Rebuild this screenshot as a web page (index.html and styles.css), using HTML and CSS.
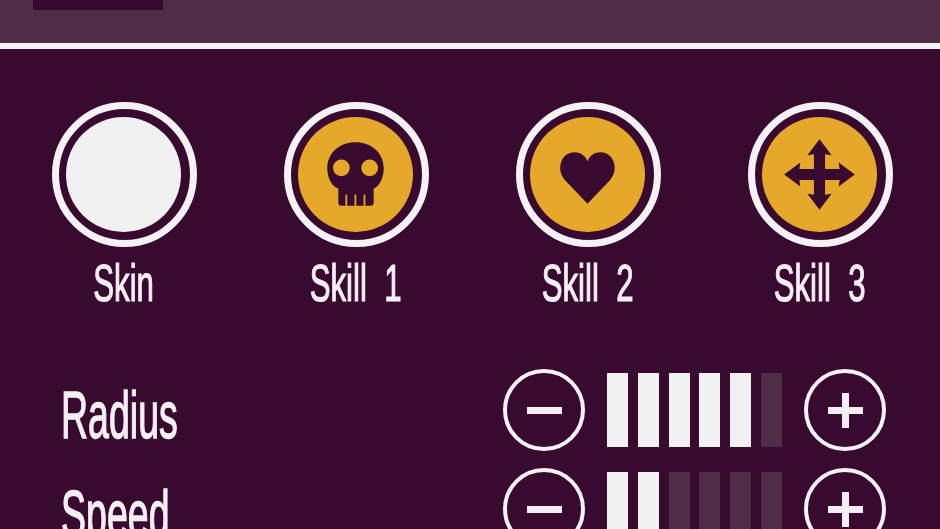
FILE: index.html
```html
<!DOCTYPE html>
<html lang="en">
<head>
<meta charset="utf-8">
<title>Skills</title>
<link rel="stylesheet" href="styles.css">
</head>
<body>
<header class="top-bar"><div class="tab"></div></header>
<main>
  <section class="skills">
    <div class="skill">
      <div class="ring"><div class="disc disc-white"></div></div>
      <div class="label"><span>Skin</span></div>
    </div>
    <div class="skill">
      <div class="ring"><div class="disc">
        <svg class="icon" viewBox="-57 -57 114 114">
          <path class="ink" d="M-17 28V14C-24 12-28 2-28-6C-28-22-15-32 0-32C15-32 28-22 28-6C28 2 24 12 18 14V28Q18 31 15 31H-14Q-17 31-17 28Z"/>
          <circle class="gold" cx="-14" cy="-6.5" r="8.3"/>
          <circle class="gold" cx="14" cy="-6.5" r="8.3"/>
          <rect class="gold" x="-10" y="20" width="1.8" height="11"/>
          <rect class="gold" x="-1" y="20" width="1.8" height="11"/>
          <rect class="gold" x="8" y="20" width="1.8" height="11"/>
        </svg>
      </div></div>
      <div class="label"><span>Skill&nbsp;&nbsp;1</span></div>
    </div>
    <div class="skill">
      <div class="ring"><div class="disc">
        <svg class="icon" viewBox="-57 -57 114 114">
          <path class="ink" d="M0 29L-22 6C-32-5-26-22-13-22C-6-22-2-18 0-13C2-18 6-22 13-22C26-22 32-5 22 6Z"/>
        </svg>
      </div></div>
      <div class="label"><span>Skill&nbsp;&nbsp;2</span></div>
    </div>
    <div class="skill">
      <div class="ring"><div class="disc">
        <svg class="icon" viewBox="-57 -57 114 114">
          <polygon class="ink" points="0,-35 12,-19 5.5,-20 5.5,-5.5 20,-5.5 19,-12 35,0 19,12 20,5.5 5.5,5.5 5.5,20 12,19 0,35 -12,19 -5.5,20 -5.5,5.5 -20,5.5 -19,12 -35,0 -19,-12 -20,-5.5 -5.5,-5.5 -5.5,-20 -12,-19"/>
        </svg>
      </div></div>
      <div class="label"><span>Skill&nbsp;&nbsp;3</span></div>
    </div>
  </section>
  <section class="stats">
    <div class="stat">
      <div class="stat-name"><span>Radius</span></div>
      <div class="control">
        <button class="round" type="button"><span class="h-bar"></span></button>
        <div class="meter">
          <i class="cell on"></i><i class="cell on"></i><i class="cell on"></i><i class="cell on"></i><i class="cell on"></i><i class="cell"></i>
        </div>
        <button class="round" type="button"><span class="h-bar"></span><span class="v-bar"></span></button>
      </div>
    </div>
    <div class="stat">
      <div class="stat-name"><span>Speed</span></div>
      <div class="control">
        <button class="round" type="button"><span class="h-bar"></span></button>
        <div class="meter">
          <i class="cell on"></i><i class="cell on"></i><i class="cell"></i><i class="cell"></i><i class="cell"></i><i class="cell"></i>
        </div>
        <button class="round" type="button"><span class="h-bar"></span><span class="v-bar"></span></button>
      </div>
    </div>
  </section>
</main>
</body>
</html>
```
FILE: styles.css
```css
* { box-sizing: border-box; }
html, body { margin: 0; height: 529px; overflow: hidden; }
body {
  background: #380a2f;
  color: #f4eff3;
  font-family: "Liberation Sans", Arial, sans-serif;
  filter: blur(0.5px);
}
.top-bar {
  height: 49px;
  background: #4f2d47;
  border-bottom: 6px solid #f6f1f5;
  padding-left: 33px;
}
.tab { width: 130px; height: 10px; background: #36082f; }
.skills {
  display: grid;
  grid-template-columns: repeat(4, 232px);
  padding: 53px 0 0 8px;
}
.skill { display: flex; flex-direction: column; align-items: center; }
.ring {
  width: 145px;
  height: 145px;
  border: 7.5px solid #f6f1f5;
  border-radius: 50%;
  padding: 7.5px;
}
.disc {
  width: 115px;
  height: 115px;
  border-radius: 50%;
  background: #e6a82b;
}
.disc-white { background: #f2f1f2; }
.icon { display: block; width: 115px; height: 115px; }
.ink { fill: #380a2f; }
.gold { fill: #e6a82b; }
.label {
  height: 56px;
  margin-top: 8px;
  font-size: 52px;
  line-height: 56px;
  white-space: nowrap;
  -webkit-text-stroke: 1.2px #f4eff3;
}
.label span { display: inline-block; transform: scaleX(0.6); }
.stats {
  padding: 58px 54px 0 61px;
  display: flex;
  flex-direction: column;
  gap: 17px;
}
.stat { display: flex; justify-content: space-between; height: 82px; }
.stat-name {
  margin-top: 5px;
  font-size: 67px;
  line-height: 82px;
  white-space: nowrap;
  -webkit-text-stroke: 1.4px #f4eff3;
}
.stat-name span { display: inline-block; transform: scaleX(0.56); transform-origin: left center; }
.control { display: flex; align-items: center; gap: 22px; }
.round {
  position: relative;
  width: 82px;
  height: 82px;
  padding: 0;
  background: none;
  border: 4px solid #f6f1f5;
  border-radius: 50%;
  display: flex;
  align-items: center;
  justify-content: center;
}
.h-bar { width: 35px; height: 7px; background: #f4eff3; }
.v-bar { position: absolute; width: 7px; height: 35px; background: #f4eff3; }
.meter { display: flex; gap: 9.8px; }
.cell { display: block; width: 21px; height: 74px; background: #4f2d47; }
.cell.on { background: #f2f1f2; }
```
